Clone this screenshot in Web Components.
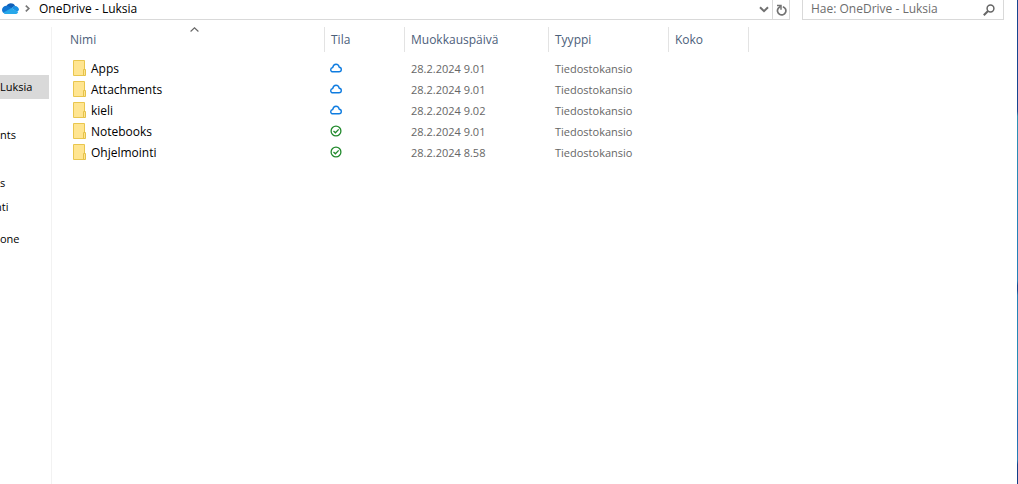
<!DOCTYPE html>
<html lang="fi">
<head>
<meta charset="utf-8">
<title>OneDrive - Luksia</title>
<style>
html, body { height: 100%; margin: 0; }
body { background: #fff; font: 12px/16px "Open Sans", "Noto Sans", sans-serif; color: #000; overflow: hidden; }
</style>
</head>
<body>
<file-explorer></file-explorer>
<script>
const ICONS = {
  onedrive: [17, 12, '<path d="M4.5 4C6 .8 11 .2 13 3.8L9 6.5z" fill="#0f5fb8"/><path d="M0 8C0 5 3 3 6 4l5 3-8 4.5C1 11 0 9.500 0 8z" fill="#1175d2"/><path d="M9.500 6L12.500 3.700C15.500 4 17 6 17 8L15 10z" fill="#1a91e4"/><path d="M1.500 10.500L9.500 6l6.700 4.200C15.500 11.500 14.500 12 13 12H4c-1 0-2-.5-2.500-1.500z" fill="#28a8ea"/>'],
  crumb: [5, 7, '<path d="M.8.7L3.800 3.500.8 6.300" fill="none" stroke="#777" stroke-width="1.700"/>'],
  down: [10, 7, '<path d="M1 1.200L5 5.200 9 1.200" fill="none" stroke="#707070" stroke-width="2"/>'],
  refresh: [11, 12, '<path d="M6.800 2.700A4.200 4.200 0 1 1 2.400 4.100L4.600 2.200" fill="none" stroke="#737373" stroke-width="1.700"/><path d="M1 1.500h4v4.200" fill="none" stroke="#737373" stroke-width="1.500"/>'],
  search: [12, 12, '<circle cx="7.500" cy="4.500" r="3.400" fill="none" stroke="#666" stroke-width="1.500"/><path d="M5 7L.8 11.200" stroke="#666" stroke-width="2"/>'],
  sort: [9, 5, '<path d="M.6 4.500L4.500.8 8.400 4.500" fill="none" stroke="#666" stroke-width="1.100"/>'],
  folder: [13, 16, '<path d="M.5.5h11v15H.5z" fill="#ffe591" stroke="#e9c64e"/><path d="M10.500 9.500h2v6h-2z" fill="#ffe591" stroke="#e5c24a"/>'],
  cloud: [12, 10, '<path d="M3 8.800C1.500 8.800.7 7.800.7 6.700S1.500 4.700 2.700 4.500C3.100 2.400 4.300 1.200 6 1.200s2.900 1.200 3.200 3c1.300.1 2.100 1.100 2.100 2.300s-.8 2.300-2.300 2.300z" fill="none" stroke="#0f7ce0" stroke-width="1.400"/>'],
  check: [12, 12, '<circle cx="6" cy="6" r="4.900" fill="none" stroke="#218a2c" stroke-width="1.300"/><path d="M3.500 6l1.900 1.800L8.700 4.400" fill="none" stroke="#218a2c" stroke-width="1.300"/>']
};

function define(name, html) {
  const template = document.createElement('template');
  template.innerHTML = html;
  customElements.define(name, class extends HTMLElement {
    constructor() {
      super();
      this.attachShadow({ mode: 'open' }).append(template.content.cloneNode(true));
    }
  });
}

customElements.define('ui-icon', class extends HTMLElement {
  constructor() {
    super();
    this.attachShadow({ mode: 'open' });
  }
  connectedCallback() {
    const [w, h, art] = ICONS[this.getAttribute('name')];
    this.shadowRoot.innerHTML = `<style>:host { display: inline-flex; flex: none; } svg { display: block; }</style>
      <svg width="${w}" height="${h}" viewBox="0 0 ${w} ${h}" aria-hidden="true">${art}</svg>`;
  }
});

define('address-bar', `
<style>
:host { display: flex; flex: 1; height: 19px; border: solid #d9d9d9; border-width: 0 1px 1px 0; box-sizing: content-box; }
nav { display: flex; flex: 1; align-items: center; gap: 8px; padding: 0 0 2px 2px; }
ui-icon[name=onedrive] { margin-right: -2px; padding-bottom: 2px; }
ui-icon[name=crumb] { padding-right: 1px; }
a { color: #000; text-decoration: none; }
button { display: flex; align-items: center; justify-content: center; width: 16px; padding: 0; border: 0; background: none; }
.refresh { border-left: 1px solid #d9d9d9; width: 17px; }
</style>
<nav aria-label="Polku"><ui-icon name="onedrive"></ui-icon><ui-icon name="crumb"></ui-icon><a href="#"><slot></slot></a></nav>
<button type="button" aria-label="Edelliset sijainnit"><ui-icon name="down"></ui-icon></button>
<button type="button" class="refresh" aria-label="Päivitä"><ui-icon name="refresh"></ui-icon></button>`);

define('search-box', `
<style>
:host { display: flex; width: 200px; height: 19px; border: solid #d9d9d9; border-width: 0 1px 1px; align-items: center; }
input { flex: 1; min-width: 0; height: 18px; margin: 0 0 2px; padding: 0 8px; border: 0; outline: 0; background: none; font: inherit; color: #6d6d6d; }
input::placeholder { color: #6d6d6d; opacity: 1; }
button { display: flex; padding: 0 8px 0 0; border: 0; background: none; }
</style>
<input type="text" aria-label="Hae" placeholder="Hae: OneDrive - Luksia">
<button type="button" aria-label="Hae kansiosta"><ui-icon name="search"></ui-icon></button>`);

define('nav-item', `
<style>
:host { display: block; width: 49px; overflow: hidden; }
a { display: block; height: 24px; font-size: 11px; line-height: 24px; color: #000; text-decoration: none; white-space: nowrap; }
:host([selected]) a { background: #d9d9d9; }
:host([cut]) a { text-indent: -5px; }
</style>
<a href="#"><slot></slot></a>`);

define('nav-pane', `
<style>
:host { display: block; flex: none; width: 51px; border-right: 1px solid #f2f2f2; }
nav { display: flex; flex-direction: column; padding-top: 48px; }
.group { display: flex; flex-direction: column; margin-bottom: 24px; }
.tight { margin-bottom: 8px; }
</style>
<nav aria-label="Siirtymisruutu">
<div class="group"><nav-item selected>Luksia</nav-item></div>
<div class="group"><nav-item>nts</nav-item></div>
<div class="group tight"><nav-item>s</nav-item><nav-item cut>nti</nav-item></div>
<div class="group"><nav-item>one</nav-item></div>
</nav>`);

const rows = [
  ['Apps', 'cloud', '28.2.2024 9.01'],
  ['Attachments', 'cloud', '28.2.2024 9.01'],
  ['kieli', 'cloud', '28.2.2024 9.02'],
  ['Notebooks', 'check', '28.2.2024 9.01'],
  ['Ohjelmointi', 'check', '28.2.2024 8.58']
];

define('file-list', `
<style>
:host { display: block; flex: 1; min-width: 0; }
table { border-collapse: separate; border-spacing: 0; table-layout: fixed; width: 697px; }
.name { width: 273px; } .state, .size { width: 80px; } .date { width: 144px; } .type { width: 120px; }
th { position: relative; box-sizing: border-box; height: 25px; padding: 0 6px; border-right: 1px solid #e3e3e3; text-align: left; font-weight: 400; color: #4c607a; }
th:first-child { padding-left: 18px; }
th ui-icon { position: absolute; top: 0; left: 138px; }
tbody::before { content: ""; display: block; height: 6px; }
td { height: 21px; padding: 0 6px; font-size: 11px; color: #666; white-space: nowrap; }
td:first-child { padding-left: 21px; font-size: 12px; color: #000; }
td:nth-child(2) { padding-left: 5px; }
.file { display: flex; align-items: center; gap: 5px; }
td ui-icon { padding-bottom: 1px; }
</style>
<table>
<colgroup><col class="name"><col class="state"><col class="date"><col class="type"><col class="size"></colgroup>
<thead><tr><th scope="col" aria-sort="ascending">Nimi<ui-icon name="sort"></ui-icon></th><th scope="col">Tila</th><th scope="col">Muokkauspäivä</th><th scope="col">Tyyppi</th><th scope="col">Koko</th></tr></thead>
<tbody>${rows.map(([name, state, date]) => `<tr><td><div class="file"><ui-icon name="folder"></ui-icon>${name}</div></td><td><div class="file"><ui-icon name="${state}"></ui-icon></div></td><td>${date}</td><td>Tiedostokansio</td><td></td></tr>`).join('')}</tbody>
</table>`);

define('file-explorer', `
<style>
:host { display: flex; height: 100%; }
.window { display: flex; flex: 1; flex-direction: column; min-width: 0; }
header { display: flex; gap: 12px; padding-right: 13px; }
main { display: flex; flex: 1; padding-top: 7px; }
.desktop { width: 1px; background: linear-gradient(#17468f 0 23%, #2e90b5 24%, #2480b8 50% 58%, #124790 59% 60%, #2480b8 61%, #278fb5 78%, #2467b0 88%, #2480b8 95%, #123f88 96%); }
</style>
<div class="window">
<header><address-bar>OneDrive - Luksia</address-bar><search-box></search-box></header>
<main><nav-pane></nav-pane><file-list></file-list></main>
</div>
<div class="desktop"></div>`);
</script>
</body>
</html>
